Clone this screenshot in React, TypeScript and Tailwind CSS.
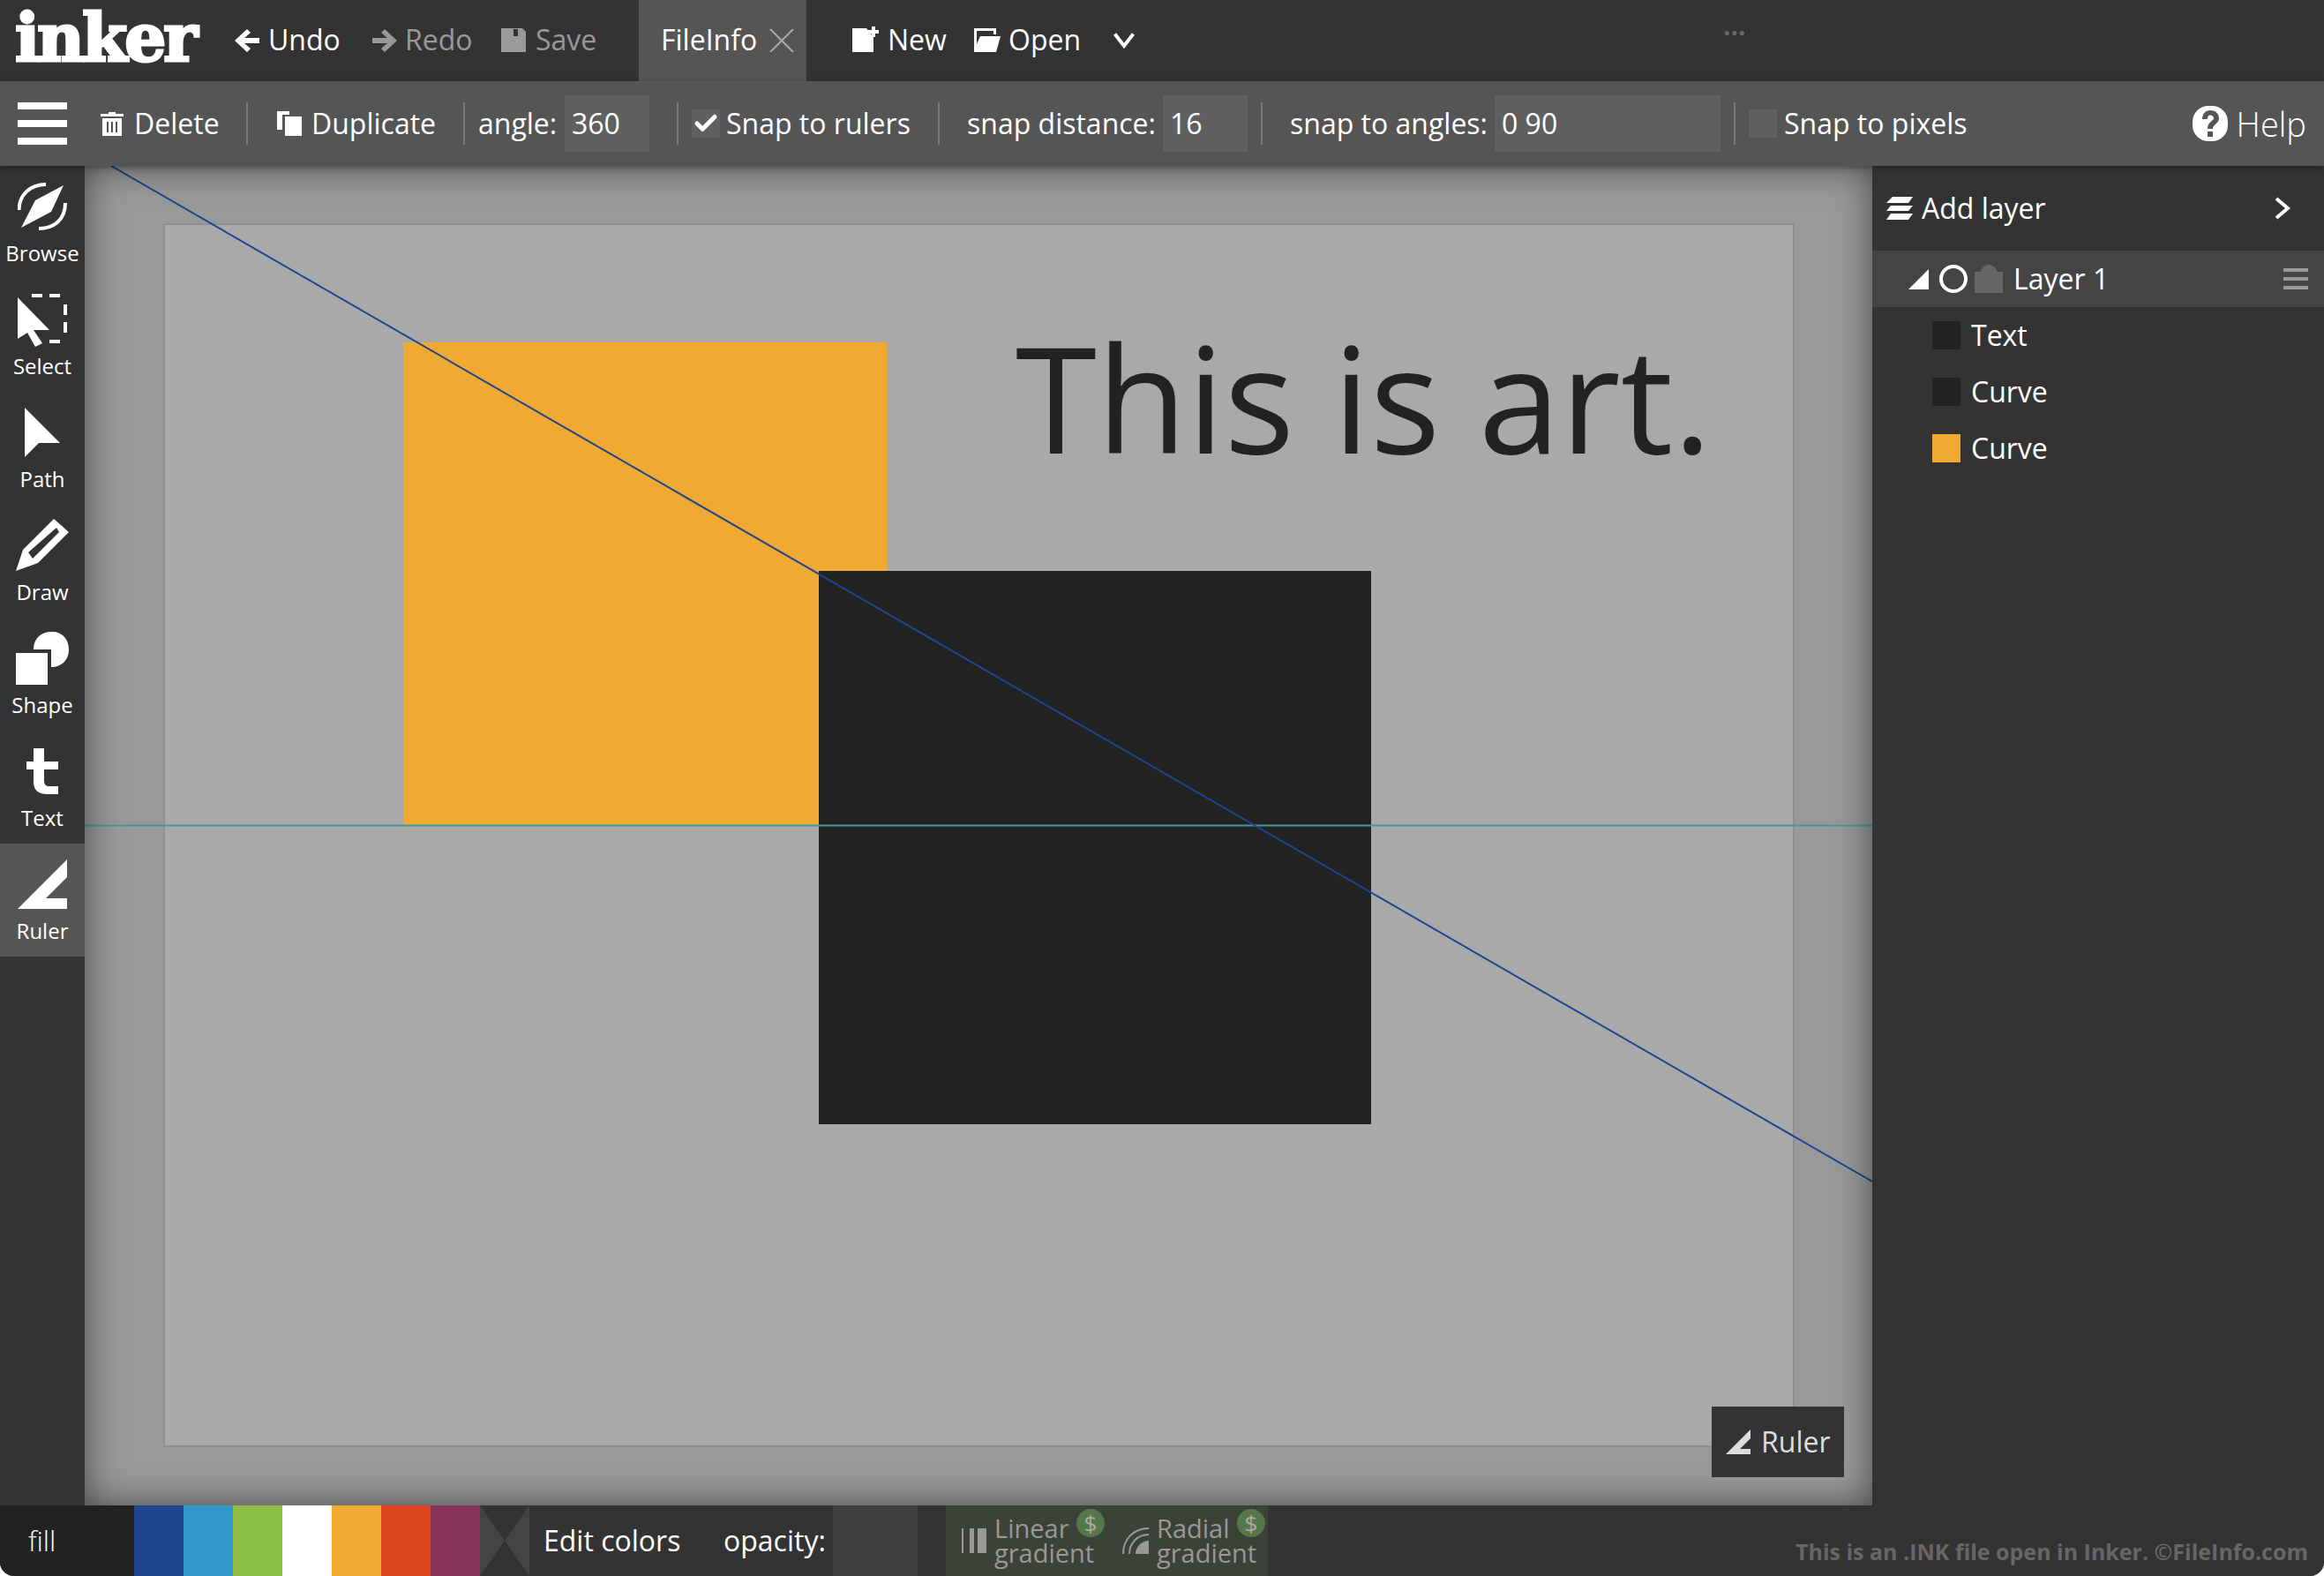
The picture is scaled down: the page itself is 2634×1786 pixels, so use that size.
import { Check } from "lucide-react";

const tools = [
  { label: "Browse", icon: <BrowseIcon /> },
  { label: "Select", icon: <SelectIcon /> },
  { label: "Path", icon: <PathIcon /> },
  { label: "Draw", icon: <DrawIcon /> },
  { label: "Shape", icon: <ShapeIcon /> },
  { label: "Text", icon: <TextIcon /> },
  { label: "Ruler", icon: <RulerIcon />, active: true },
];

const swatches = ["bg-[#20468c]", "bg-[#3399cc]", "bg-[#8bbd45]", "bg-white", "bg-[#f0aa33]", "bg-[#dd4620]", "bg-[#8a3358]"];

function BrowseIcon() {
  return (
    <svg width="56" height="56" viewBox="0 0 56 56" fill="white">
      <path d="M52 4 L38 34 L4 52 L20 21 Z" />
      <path d="M1.5 32 C1.5 15 14 3 32 3" fill="none" stroke="white" strokeWidth="4" />
      <path d="M54 24 C54 42 42 53 24 53" fill="none" stroke="white" strokeWidth="4" />
    </svg>
  );
}

function SelectIcon() {
  return (
    <svg width="56" height="61" viewBox="0 0 56 61" fill="white">
      <path d="M0 5 L36 42 L18 42 L28 57 L20 61 L11 45 L0 52 Z" />
      <path d="M16 1h12v4H16z M36 1h12v4H36z M52 13h4v12h-4z M52 33h4v12h-4z M36 53h12v4H36z" />
    </svg>
  );
}

function PathIcon() {
  return (
    <svg width="40" height="56" viewBox="0 0 40 56" fill="white">
      <path d="M0 0 L40 40 L16 40 L0 56 Z" />
    </svg>
  );
}

function DrawIcon() {
  return (
    <svg width="60" height="60" viewBox="0 0 60 60" fill="white">
      <path fillRule="evenodd" d="M0 59 L8 35 L43 0 L60 15 L25 50 Z M14 38 L19 45 L49 15 L46 10 Z" />
    </svg>
  );
}

function ShapeIcon() {
  return (
    <svg width="60" height="60" viewBox="0 0 60 60" fill="white">
      <path d="M0 24h36v36H0z" />
      <path d="M20 20 C20 8 28 0 40 0 H42 C52 0 60 8 60 20 C60 32 52 40 40 40 V20 Z" />
    </svg>
  );
}

function TextIcon() {
  return (
    <svg width="36" height="52" viewBox="0 0 36 52" fill="white">
      <path d="M8 0h12v15h16v9H20v13c0 4 2 6 6 6h10v9H24C13 52 8 47 8 38V24H0v-9h8z" />
    </svg>
  );
}

function RulerIcon({ size = 56 }: { size?: number }) {
  return (
    <svg width={size} height={size} viewBox="0 0 56 56" fill="currentColor">
      <path d="M0 56 L56 0 L56 20 L32 44 L56 44 L56 56 Z" />
    </svg>
  );
}

function UndoIcon({ flip = false }: { flip?: boolean }) {
  return (
    <svg width="28" height="26" viewBox="0 0 28 26" fill="currentColor" className={flip ? "-scale-x-100" : ""}>
      <path d="M14 0 L18 4 L11 10 H28 V16 H11 L18 22 L14 26 L0 13 Z" />
    </svg>
  );
}

function SaveIcon() {
  return (
    <svg width="28" height="27" viewBox="0 0 28 27" fill="currentColor">
      <path fillRule="evenodd" d="M0 0 H24 L28 4 V27 H0 Z M14 1 V9 H19 V1 Z" />
    </svg>
  );
}

function NewIcon() {
  return (
    <svg width="30" height="30" viewBox="0 0 30 30" fill="white">
      <path d="M0 2h16l8 10v17H0z" />
      <path d="M22 0h4v4h4v4h-4v4h-4V8h-4V4h4z" />
    </svg>
  );
}

function OpenIcon() {
  return (
    <svg width="30" height="27" viewBox="0 0 30 27" fill="white">
      <path d="M0 0h25v7h-3V3H3v15L7 9h23l-5 18H0z" />
    </svg>
  );
}

function TrashIcon() {
  return (
    <svg width="26" height="27" viewBox="0 0 26 27" fill="white">
      <path d="M9 0h8v2h9v3H0V2h9z" />
      <path fillRule="evenodd" d="M2 7h22v20H2z M7 11v12h2V11z M12 11v12h2V11z M17 11v12h2V11z" />
    </svg>
  );
}

function DuplicateIcon() {
  return (
    <svg width="28" height="28" viewBox="0 0 28 28" fill="white">
      <path d="M0 0h14v4H6v17H0z" />
      <path d="M9 6h19v22H9z" />
    </svg>
  );
}

function LayersIcon() {
  return (
    <svg width="30" height="26" viewBox="0 0 30 26" fill="white">
      <path d="M7 0h23l-5 7H0z" />
      <path d="M5 10h25l-5 6H0z" />
      <path d="M5 19h25l-5 7H0z" />
    </svg>
  );
}

function HelpIcon() {
  return (
    <svg width="40" height="40" viewBox="0 0 40 40">
      <rect width="40" height="40" rx="18" fill="white" />
      <path d="M11 15 C11 9 15 5 20 5 C26 5 30 9 30 14 C30 20 23 21 23 26 H17 C17 18 24 17 24 14 C24 12 22 10.500 20 10.500 C18 10.500 17 12 17 15 Z" fill="#555" />
      <rect x="17" y="29" width="6" height="6" fill="#555" />
    </svg>
  );
}

function Divider() {
  return <div className="w-[2px] h-[48px] bg-[#7a7a7a] shrink-0" />;
}

function FieldInput({ value, width }: { value: string; width: string }) {
  return <div className={`h-[64px] bg-[#606060] flex items-center pl-[8px] shrink-0 ${width}`}>{value}</div>;
}

function PriceBadge({ left }: { left: string }) {
  return (
    <span className={`absolute top-[4px] w-[32px] h-[32px] rounded-full bg-[#56774a] text-[#aaa] text-[26px] leading-none flex items-center justify-center ${left}`}>
      $
    </span>
  );
}

export default function App() {
  return (
    <div className="w-[2634px] h-[1786px] flex flex-col overflow-hidden rounded-b-[16px] bg-[#333] text-white text-[32px] font-['Open_Sans',sans-serif]">
      {/* top bar */}
      <div className="h-[92px] flex items-center bg-[#333] shrink-0">
        <div className="w-[240px] pl-[17px] text-[74px] leading-[86px] font-bold tracking-[-3px] text-white [-webkit-text-stroke:3px_white] font-['DejaVu_Serif',serif] pb-[6px]">
          inker
        </div>
        <div className="ml-[26px] text-white"><UndoIcon /></div>
        <span className="ml-[10px] w-[118px] pb-[2px]">Undo</span>
        <div className="text-[#999]"><UndoIcon flip /></div>
        <span className="ml-[9px] w-[109px] text-[#999] pb-[2px]">Redo</span>
        <div className="text-[#999] pb-[2px]"><SaveIcon /></div>
        <span className="ml-[11px] w-[117px] text-[#999] pb-[2px]">Save</span>
        <div className="w-[190px] h-full bg-[#555] flex items-center pl-[25px]">
          <span className="w-[123px] pb-[2px]">FileInfo</span>
          <svg width="28" height="26" viewBox="0 0 28 26" stroke="#aaa" strokeWidth="2">
            <line x1="1" y1="0" x2="27" y2="26" />
            <line x1="27" y1="0" x2="1" y2="26" />
          </svg>
        </div>
        <div className="ml-[52px] pb-[2px]"><NewIcon /></div>
        <span className="ml-[10px] w-[98px] pb-[2px]">New</span>
        <div className="pb-[2px]"><OpenIcon /></div>
        <span className="ml-[9px] w-[119px] pb-[2px]">Open</span>
        <svg width="24" height="18" viewBox="0 0 24 18" fill="none" stroke="white" strokeWidth="4"><path d="M1.500 1.500 L12 15 L22.500 1.500" /></svg>
        <div className="ml-[667px] mb-[34px] text-[30px] leading-none font-bold text-[#666]">...</div>
      </div>

      {/* tool options */}
      <div className="h-[96px] flex items-center bg-[#555] shrink-0 shadow-[0_2px_6px_rgba(0,0,0,0.3)] z-10 whitespace-nowrap">
        <div className="w-[96px] h-full flex flex-col items-center justify-center gap-[12px] shrink-0">
          <div className="w-[56px] h-[8px] bg-white" />
          <div className="w-[56px] h-[8px] bg-white" />
          <div className="w-[56px] h-[8px] bg-white" />
        </div>
        <div className="ml-[18px]"><TrashIcon /></div>
        <span className="ml-[12px] w-[127px]">Delete</span>
        <Divider />
        <div className="ml-[33px]"><DuplicateIcon /></div>
        <span className="ml-[11px] w-[172px]">Duplicate</span>
        <Divider />
        <span className="ml-[15px] w-[98px]">angle:</span>
        <FieldInput value="360" width="w-[96px]" />
        <div className="ml-[31px]"><Divider /></div>
        <div className="ml-[15px] w-[32px] h-[32px] bg-[#606060] flex items-center justify-center shrink-0">
          <Check className="w-[30px] h-[30px]" strokeWidth={4} />
        </div>
        <span className="ml-[7px] w-[240px]">Snap to rulers</span>
        <Divider />
        <span className="ml-[31px] w-[222px]">snap distance:</span>
        <FieldInput value="16" width="w-[96px]" />
        <div className="ml-[15px]"><Divider /></div>
        <span className="ml-[31px] w-[232px]">snap to angles:</span>
        <FieldInput value="0 90" width="w-[256px]" />
        <div className="ml-[15px]"><Divider /></div>
        <div className="ml-[15px] w-[32px] h-[32px] bg-[#606060] shrink-0" />
        <span className="ml-[8px]">Snap to pixels</span>
        <div className="ml-auto flex items-center gap-[10px] pr-[20px] text-[38px] font-light">
          <HelpIcon />
          <span>Help</span>
        </div>
      </div>

      {/* middle */}
      <div className="flex-1 flex min-h-0">
        <div className="w-[96px] shrink-0 flex flex-col bg-[#333]">
          {tools.map((t) => (
            <div key={t.label} className={`h-[128px] flex flex-col items-center pt-[16px] text-[24px] ${t.active ? "bg-[#555]" : ""}`}>
              <div className="h-[60px] flex items-center justify-center">{t.icon}</div>
              <span className="mt-[7px] leading-[32px]">{t.label}</span>
            </div>
          ))}
        </div>

        {/* canvas */}
        <div className="relative flex-1 bg-[#999] overflow-hidden">
          <div className="absolute left-[89px] top-[65px] w-[1849px] h-[1387px] bg-[#a9a9a9] border-2 border-[#8e8e8e]" />
          <div className="absolute left-[361px] top-[200px] w-[548px] h-[547px] bg-[#f0aa33]" />
          <div className="absolute left-[832px] top-[459px] w-[626px] h-[627px] bg-[#222]" />
          <div className="absolute left-[1055px] top-[162px] text-[#222] text-[167px] leading-[200px] whitespace-nowrap">This is art.</div>
          <svg className="absolute inset-0" width="2026" height="1518">
            <line x1="0" y1="747.5" x2="2026" y2="747.5" stroke="#3f9a9a" strokeWidth="2" />
            <line x1="30" y1="0" x2="2026" y2="1151" stroke="#20468c" strokeWidth="2" />
          </svg>
          <div className="absolute inset-0 shadow-[inset_0_0_40px_rgba(0,0,0,0.55)]" />
          <div className="absolute left-[1844px] top-[1406px] w-[150px] h-[80px] bg-[#333] flex items-center pl-[16px] gap-[12px] text-[#ddd]">
            <RulerIcon size={28} />
            <span>Ruler</span>
          </div>
        </div>

        {/* layers */}
        <div className="w-[512px] shrink-0 bg-[#333] flex flex-col">
          <div className="h-[96px] flex items-center pl-[16px] pr-[38px]">
            <LayersIcon />
            <span className="ml-[10px]">Add layer</span>
            <svg className="ml-auto" width="18" height="26" viewBox="0 0 18 26" fill="none" stroke="white" strokeWidth="4"><path d="M2 2 L15 13 L2 24" /></svg>
          </div>
          <div className="h-[64px] bg-[#444] flex items-center pl-[41px] pr-[18px]">
            <svg width="23" height="23" viewBox="0 0 24 24" fill="white"><path d="M0 24 L24 0 V24 Z" /></svg>
            <div className="ml-[12px] w-[32px] h-[32px] rounded-full border-[4px] border-white" />
            <svg className="ml-[8px]" width="32" height="32" viewBox="0 0 32 32" fill="#666"><path d="M0 8 H6 C8 3 12 0 16 0 C20 0 24 3 26 8 H32 V32 H0 Z" /></svg>
            <span className="ml-[12px]">Layer 1</span>
            <div className="ml-auto flex flex-col gap-[6px]">
              <div className="w-[28px] h-[4px] bg-[#999]" />
              <div className="w-[28px] h-[4px] bg-[#999]" />
              <div className="w-[28px] h-[4px] bg-[#999]" />
            </div>
          </div>
          {[
            { name: "Text", color: "bg-[#222]" },
            { name: "Curve", color: "bg-[#222]" },
            { name: "Curve", color: "bg-[#f0aa33]" },
          ].map((l, i) => (
            <div key={i} className="h-[64px] flex items-center pl-[68px]">
              <div className={`w-[32px] h-[32px] ${l.color}`} />
              <span className="ml-[12px]">{l.name}</span>
            </div>
          ))}
        </div>
      </div>

      {/* bottom bar */}
      <div className="h-[80px] shrink-0 bg-[#333] flex items-stretch whitespace-nowrap">
        <div className="w-[152px] bg-[#222] rounded-bl-[16px] flex items-center pl-[32px] font-light">fill</div>
        {swatches.map((c) => (
          <div key={c} className={`w-[56px] ${c}`} />
        ))}
        <svg width="56" height="80" viewBox="0 0 56 80" fill="#444"><path d="M0 0 L28 40 L0 80 Z M56 0 L28 40 L56 80 Z" /></svg>
        <div className="flex items-center ml-[16px] w-[204px]">Edit colors</div>
        <div className="flex items-center w-[124px]">opacity:</div>
        <div className="w-[96px] bg-[#3e3e3e]" />
        <div className="ml-[32px] w-[365px] pl-[18px] bg-[#3d4238] flex items-center text-[#999] leading-[28px] text-[29px]">
          <svg width="28" height="28" viewBox="0 0 28 28" fill="#999"><path d="M0 0h2v28H0z M9 0h5v28H9z M18 0h10v28H18z" /></svg>
          <div className="relative ml-[9px] w-[145px] self-stretch flex flex-col justify-center items-start">
            <div>Linear</div>
            <div>gradient</div>
            <PriceBadge left="left-[93px]" />
          </div>
          <svg width="30" height="30" viewBox="0 0 30 30" fill="none" stroke="#999"><path d="M1 30 C1 13 13 1 30 1" strokeWidth="2" /><path d="M8 30 C8 18 17 8 30 8" strokeWidth="2" /><path d="M15 30 C15 22 22 15 30 15 V30 Z" fill="#999" strokeWidth="0" /></svg>
          <div className="relative ml-[9px] w-[121px] self-stretch flex flex-col justify-center items-start">
            <div>Radial</div>
            <div>gradient</div>
            <PriceBadge left="left-[91px]" />
          </div>
        </div>
        <div className="ml-auto self-end pb-[9px] pr-[18px] text-[#666] text-[25px] font-bold">This is an .INK file open in Inker. ©FileInfo.com</div>
      </div>
    </div>
  );
}
